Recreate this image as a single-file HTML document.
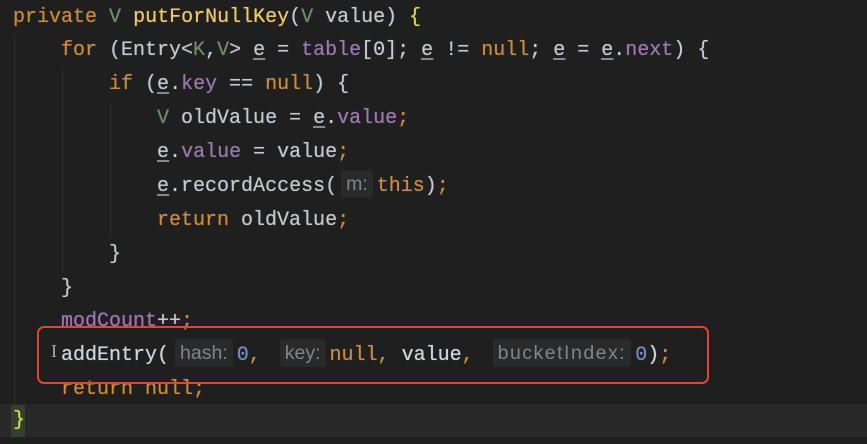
<!DOCTYPE html>
<html><head><meta charset="utf-8"><style>
html,body{margin:0;padding:0}
body{width:867px;height:444px;background:#1f1f1f;position:relative;overflow:hidden;font-family:"Liberation Mono","DejaVu Sans Mono",monospace;font-size:20px;color:#c3c9d0}
.cur{position:absolute;left:0;top:404px;width:867px;height:33px;background:#282828}
.bm{position:absolute;left:11px;top:405px;width:14px;height:32px;background:#33402f}
.g{position:absolute;width:1px;background:#2e2e2e}
.l{position:absolute;left:13px;height:34px;line-height:34px;white-space:pre;text-shadow:0 0 0.6px currentColor}
.k{color:#cc8a3c}.t{color:#6f8a70}.m{color:#f2c766}.p{color:#9d78b0}.n{color:#6f8fc4}.y{color:#d6e04a}
.u{text-decoration:underline;text-decoration-color:#888;text-underline-offset:3px}
.h{display:inline-block;height:28px;line-height:28px;vertical-align:middle;font-family:"Liberation Sans","DejaVu Sans",sans-serif;font-size:19.5px;color:#80858a;background:#2a2a2a;border-radius:3px;padding:0 5px;margin:-4px 4px 0 8px;text-shadow:none}
.box{position:absolute;left:37px;top:326px;width:668px;height:54px;border:2.5px solid #e8412c;border-radius:7px}
</style></head><body>
<div class="cur"></div>
<div class="bm"></div>
<div class="g" style="left:14px;top:34px;height:370px"></div>
<div class="g" style="left:62px;top:68px;height:204px"></div>
<div class="g" style="left:110px;top:102px;height:136px"></div>
<div class="l" style="top:1px"><span class="k">private</span> <span class="t">V</span> <span class="m">putForNullKey</span>(<span class="t">V</span> value) <span class="y">{</span></div>
<div class="l" style="top:34px">    <span class="k">for</span> (Entry&lt;<span class="t">K</span>,<span class="t">V</span>&gt; <span class="u">e</span> = <span class="p">table</span>[0]; <span class="u">e</span> != <span class="k">null</span>; <span class="u">e</span> = <span class="u">e</span>.<span class="p">next</span>) {</div>
<div class="l" style="top:68px">        <span class="k">if</span> (<span class="u">e</span>.<span class="p">key</span> == <span class="k">null</span>) {</div>
<div class="l" style="top:102px">            <span class="t">V</span> oldValue = <span class="u">e</span>.<span class="p">value</span><span class="k">;</span></div>
<div class="l" style="top:136px">            <span class="u">e</span>.<span class="p">value</span> = value<span class="k">;</span></div>
<div class="l" style="top:170px">            <span class="u">e</span>.recordAccess(<span class="h" style="margin-left:4px">m:</span><span class="k">this</span>)<span class="k">;</span></div>
<div class="l" style="top:204px">            <span class="k">return</span> oldValue<span class="k">;</span></div>
<div class="l" style="top:238px">        }</div>
<div class="l" style="top:272px">    }</div>
<div class="l" style="top:305px">    <span class="p">modCount</span>++<span class="k">;</span></div>
<div class="l" style="top:339px;color:#d0d6dc">    addEntry(<span class="h" style="margin-left:6px">hash:</span><span class="n">0</span><span class="k">,</span> <span class="h" style="margin-left:7px">key:</span><span class="k">null,</span> value<span class="k">,</span> <span class="h" style="margin-left:7px;letter-spacing:1.5px">bucketIndex:</span><span class="n">0</span>)<span class="k">;</span></div>
<div class="l" style="top:373px">    <span class="k">return null;</span></div>
<div class="l" style="top:404px;line-height:33px"><span class="y">}</span></div>
<div style="position:absolute;left:51px;top:341px;color:#aaa;font-family:'Liberation Serif',serif;font-size:18px">I</div>
<div class="box"></div>
</body></html>
